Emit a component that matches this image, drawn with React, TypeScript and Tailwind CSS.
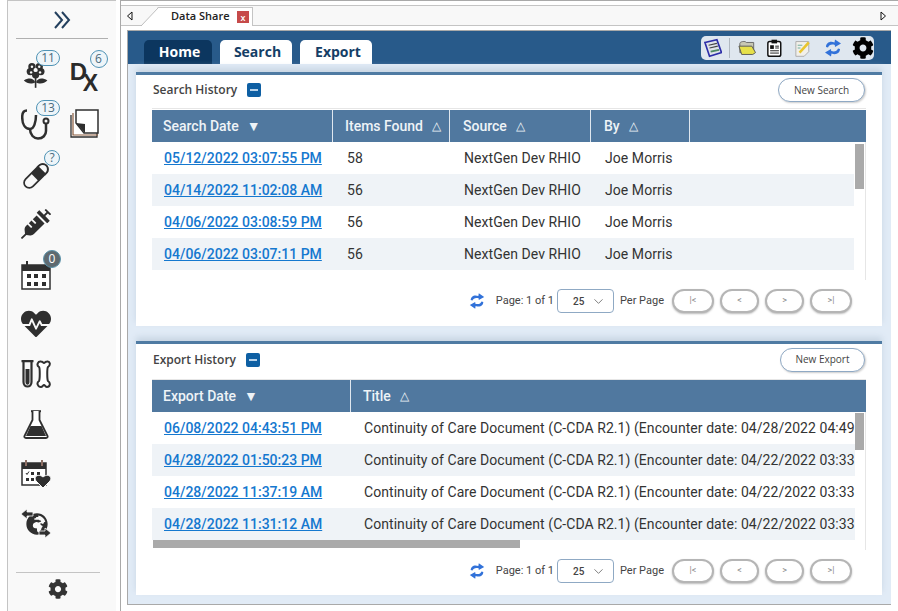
import React from "react";
import { FaCog, FaHeartbeat, FaSyringe, FaGlobeAfrica } from "react-icons/fa";
import { ChevronDown } from "lucide-react";

const ink = "#2f2f2f";

function Badge({ n, dark, className }: { n: string; dark?: boolean; className: string }) {
  return (
    <span
      className={
        "absolute flex h-[16px] items-center justify-center rounded-full border text-[12px] leading-none font-['Open_Sans',sans-serif] " +
        (dark ? "border-[#5b93ab] bg-[#5f6a70] text-white " : "border-[#4f93b5] bg-[#eef5f9] text-[#4a6a7c] ") +
        className
      }
    >
      {n}
    </span>
  );
}

function Refresh({ size = 20 }: { size?: number }) {
  return (
    <svg width={size} height={size} viewBox="0 0 20 20">
      <path d="M3 9C3 5 7 2.500 11.500 4.500L12 1.500L18 5.500L12 9L11.800 7C8.500 5.800 6 7 5 9.500Z" fill="#3272d9" />
      <path d="M17 11C17 15 13 17.500 8.500 15.500L8 18.500L2 14.500L8 11L8.200 13C11.500 14.200 14 13 15 10.500Z" fill="#3272d9" />
    </svg>
  );
}

function Sidebar() {
  return (
    <aside className="flex h-full w-[108px] flex-col items-center border-t border-[#c4c4c4] bg-[#f9f9f9]">
      <svg width="18" height="18" viewBox="0 0 18 18" className="mt-[10px] shrink-0" fill="none" stroke="#24405e" strokeWidth="2">
        <path d="M2 1L9 9L2 17" />
        <path d="M9 1L16 9L9 17" />
      </svg>
      <div className="mt-[9px] h-px w-[92px] shrink-0 bg-[#b0b0b0]" />
      <div className="mt-[10px] grid w-[106px] grid-cols-2 grid-rows-[50px_50px_50px_50px_50px_50px_50px_50px_50px_50px] pl-[1px]">
        <Cell>
          <Flower />
          <Badge n="11" className="left-[26px] top-[1px] w-[24px]" />
        </Cell>
        <Cell>
          <span className="relative block h-[34px] w-[34px] text-[#2b2b2b] font-['Liberation_Sans',sans-serif] font-bold leading-none">
            <span className="absolute -left-[2px] top-[3px] text-[24px]">D</span>
            <span className="absolute left-[11px] top-[15px] text-[23px]">X</span>
          </span>
          <Badge n="6" className="left-[27px] top-[1px] h-[18px] w-[18px]" />
        </Cell>
        <Cell>
          <Stethoscope />
          <Badge n="13" className="left-[26px] top-[1px] w-[24px]" />
        </Cell>
        <Cell>
          <span className="-translate-x-[4px]">
            <Notes />
          </span>
        </Cell>
        <Cell>
          <span className="translate-y-[2px]">
            <Capsule />
          </span>
          <Badge n="?" className="left-[34px] top-[1px] w-[16px]" />
        </Cell>
        <Cell />
        <Cell>
          <FaSyringe size={30} color={ink} />
        </Cell>
        <Cell />
        <Cell>
          <span className="translate-y-[1px]">
            <Calendar />
          </span>
          <Badge n="0" dark className="left-[33px] top-[1px] h-[18px] w-[18px]" />
        </Cell>
        <Cell />
        <Cell>
          <FaHeartbeat size={30} color={ink} />
        </Cell>
        <Cell />
        <Cell>
          <TubeBone />
        </Cell>
        <Cell />
        <Cell>
          <Flask />
        </Cell>
        <Cell />
        <Cell>
          <CalHeart />
        </Cell>
        <Cell />
        <Cell>
          <GlobeArrows />
        </Cell>
        <Cell />
      </div>
      <div className="mt-auto mb-[38px] h-px w-[84px] -translate-x-[4px] shrink-0 bg-[#c4c4c4]" />
      <div className="absolute bottom-[12px] left-[48px] text-[#333]">
        <FaCog size={20} />
      </div>
    </aside>
  );
}

function Cell({ children }: { children?: React.ReactNode }) {
  return <div className="relative flex items-center justify-center">{children}</div>;
}

function Flower() {
  return (
    <svg width="26" height="30" viewBox="0 0 32 34">
      <g fill={ink}>
        <circle cx="11" cy="8" r="4.500" />
        <circle cx="20" cy="8" r="4.500" />
        <circle cx="9" cy="14" r="4.500" />
        <circle cx="22" cy="14" r="4.500" />
        <circle cx="15.500" cy="18" r="4.500" />
        <path d="M1 25C7 21 13 22 15 27C11 30 5 29 1 25Z" />
        <path d="M30 25C24 21 18 22 16 27C20 30 26 29 30 25Z" />
        <rect x="14.500" y="20" width="2" height="14" />
      </g>
      <circle cx="15.500" cy="12" r="2.500" fill="#f9f9f9" />
      <circle cx="11" cy="8" r="1.500" fill="#f9f9f9" />
      <circle cx="20" cy="8" r="1.500" fill="#f9f9f9" />
      <circle cx="10" cy="15" r="1.500" fill="#f9f9f9" />
      <circle cx="21" cy="15" r="1.500" fill="#f9f9f9" />
    </svg>
  );
}

function Stethoscope() {
  return (
    <svg width="30" height="31" viewBox="0 0 30 31" fill="none" stroke={ink} strokeWidth="2.500">
      <path d="M6 1.500C2 1.500 1.200 4 1.200 8C1.200 15 4 20 9 20C13 20 15 13 15 6" />
      <path d="M9 20C9 26 13 29.500 17 29.500C22 29.500 25 26 25 22V14" />
      <circle cx="25" cy="12" r="2.500" fill="#f9f9f9" strokeWidth="2" />
    </svg>
  );
}

function Notes() {
  return (
    <svg width="30" height="30" viewBox="0 0 30 30">
      <path d="M1 6V28H27V24" fill="#fff" stroke={ink} strokeWidth="1.300" />
      <path d="M3 4V26H28" fill="none" stroke="#8a5a3c" strokeWidth="1.200" />
      <path d="M6 1H28V24H14L6 14Z" fill="#fff" stroke={ink} strokeWidth="1.500" />
      <path d="M6 14L15 15L15 24Z" fill={ink} />
    </svg>
  );
}

function Capsule() {
  return (
    <svg width="26" height="26" viewBox="0 0 30 30">
      <g transform="rotate(-45 15 15)">
        <rect x="-2" y="9" width="34" height="12" rx="6" fill="#f9f9f9" stroke={ink} strokeWidth="2" />
        <rect x="13" y="9" width="11" height="12" fill={ink} />
        <path d="M24 9H26C29 9 32 12 32 15C32 18 29 21 26 21H24Z" fill="#f9f9f9" stroke={ink} strokeWidth="2" />
      </g>
    </svg>
  );
}

function Calendar() {
  return (
    <svg width="30" height="30" viewBox="0 0 30 30">
      <rect x="1" y="5" width="28" height="24" fill="#fff" stroke={ink} strokeWidth="1.500" />
      <rect x="1" y="5" width="28" height="6" fill={ink} />
      <rect x="5" y="1" width="2" height="7" fill={ink} />
      <g fill={ink}>
        <rect x="6" y="14" width="4" height="4" />
        <rect x="13" y="14" width="4" height="4" />
        <rect x="21" y="14" width="4" height="4" />
        <rect x="6" y="22" width="4" height="4" />
        <rect x="13" y="22" width="4" height="4" />
        <rect x="21" y="22" width="4" height="4" />
      </g>
    </svg>
  );
}

function TubeBone() {
  return (
    <svg width="30" height="28" viewBox="0 0 30 28">
      <path d="M0.500 1.200H12.500M2.500 1V22C2.500 28 10.500 28 10.500 22V1" fill="none" stroke={ink} strokeWidth="2.200" />
      <path d="M4.500 9H8.500V22C8.500 25.500 4.500 25.500 4.500 22Z" fill={ink} />
      <path
        d="M18 7C15 5 17 1 20 1.500C21.500 1.500 22 3 23 3C24 3 24.500 1.500 26 1.500C29 1 30 5 27 7C26 8 26 19 27 21C30 23 29 27 26 27C24.500 27 24 25 23 25C22 25 21.500 27 20 27C17 27 15 23 18 21C19 19 19 8 18 7Z"
        fill="#fff"
        stroke={ink}
        strokeWidth="2"
      />
    </svg>
  );
}

function Flask() {
  return (
    <svg width="26" height="29" viewBox="0 0 26 29">
      <path d="M8 1.200H18" stroke={ink} strokeWidth="2" />
      <path d="M9.500 1V10L1.500 26C1 27 1.500 28 3 28H23C24.500 28 25 27 24.500 26L16.500 10V1" fill="#fff" stroke={ink} strokeWidth="1.800" />
      <path d="M7.500 16H18.500L23 26H3Z" fill={ink} />
    </svg>
  );
}

function CalHeart() {
  return (
    <svg width="30" height="30" viewBox="0 0 30 30">
      <rect x="1" y="4" width="24" height="22" fill="#fff" stroke={ink} strokeWidth="1.500" />
      <rect x="1" y="4" width="24" height="6" fill={ink} />
      <rect x="4" y="1" width="2" height="6" fill="#8d6e63" />
      <rect x="20" y="1" width="2" height="6" fill="#8d6e63" />
      <g fill={ink}>
        <rect x="10" y="13" width="3" height="3" />
        <rect x="16" y="13" width="3" height="3" />
        <rect x="5" y="19" width="3" height="3" />
        <rect x="10" y="19" width="3" height="3" />
      </g>
      <path d="M5 14L6 15.500L8 12.500" fill="none" stroke={ink} strokeWidth="1" />
      <path d="M22 29L15 22C12 18 17 14 22 18C27 14 32 18 29 22Z" fill={ink} stroke="#f9f9f9" strokeWidth="1" />
    </svg>
  );
}

function GlobeArrows() {
  return (
    <span className="relative block h-[30px] w-[30px]">
      <span className="absolute left-[5px] top-[4px]">
        <FaGlobeAfrica size={22} color={ink} />
      </span>
      <svg width="30" height="30" viewBox="0 0 30 30" className="absolute left-0 top-0">
        <path d="M0 5L6 0V3H12V7H6V10Z" fill={ink} stroke="#f9f9f9" strokeWidth="0.800" />
        <path d="M30 24L24 19V22H18V26H24V29Z" fill={ink} stroke="#f9f9f9" strokeWidth="0.800" />
      </svg>
    </span>
  );
}

function Pager() {
  const btn =
    "flex h-[24px] items-center justify-center rounded-full border-2 border-[#b5b5b5] bg-white text-[9px] text-[#8a8a8a] shadow-[0_1px_2px_#bbb] font-['Roboto',sans-serif]";
  return (
    <div className="flex items-center justify-end pr-[14px] text-[11px] text-[#444] font-['Roboto',sans-serif]">
      <Refresh size={18} />
      <span className="ml-[10px]">Page: 1 of 1</span>
      <div className="ml-[3px] flex h-[24px] w-[57px] items-center justify-between rounded-[4px] border border-[#8fa9c4] pl-[15px] pr-[7px]">
        <span className="text-[10px] font-medium">25</span>
        <ChevronDown size={15} strokeWidth={1.200} color="#555" />
      </div>
      <span className="ml-[6px]">Per Page</span>
      <div className="ml-[8px] flex gap-[6px]">
        <span className={btn + " w-[42px]"}>|&lt;</span>
        <span className={btn + " w-[39px]"}>&lt;</span>
        <span className={btn + " w-[39px]"}>&gt;</span>
        <span className={btn + " w-[42px]"}>&gt;|</span>
      </div>
    </div>
  );
}

function Minus() {
  return (
    <span className="flex h-[14px] w-[14px] items-center justify-center rounded-[2px] bg-[#0e5fa3]">
      <span className="h-[2px] w-[8px] bg-[#b9d3ea]" />
    </span>
  );
}

function HeadCell({ label, arrow, className }: { label: string; arrow: string; className: string }) {
  return (
    <div className={"flex h-full shrink-0 items-center border-r border-[#dfe7ef] pl-[11px] " + className}>
      <span>{label}</span>
      <span className={arrow === "▼" ? "ml-[8px] text-[14px]" : "ml-[9px] text-[12px] font-normal"}>{arrow}</span>
    </div>
  );
}

const searchRows = ["05/12/2022 03:07:55 PM", "04/14/2022 11:02:08 AM", "04/06/2022 03:08:59 PM", "04/06/2022 03:07:11 PM"];
const searchItems = ["58", "56", "56", "56"];
const exportRows = [
  ["06/08/2022 04:43:51 PM", "04/28/2022 04:49"],
  ["04/28/2022 01:50:23 PM", "04/22/2022 03:33"],
  ["04/28/2022 11:37:19 AM", "04/22/2022 03:33"],
  ["04/28/2022 11:31:12 AM", "04/22/2022 03:33"],
];

function SearchPanel() {
  return (
    <section className="h-[254px] shrink-0 border-t-[3px] border-[#4f7ba3] bg-white px-[16px] shadow-[0_-4px_6px_#c9d6e4]">
      <div className="flex h-[34px] items-center justify-between border-b border-[#e6e6e6] pb-[3px]">
        <div className="ml-[1px] flex items-center gap-[10px] text-[12px] font-semibold text-[#444] font-['Open_Sans',sans-serif]">
          Search History
          <Minus />
        </div>
        <button className="mr-[1px] h-[24px] w-[87px] rounded-full border border-[#8fa9c4] bg-white text-[10px] text-[#444] shadow-[1px_1px_2px_#ccc] font-['Open_Sans',sans-serif]">
          New Search
        </button>
      </div>
      <div className="mt-[1px] flex h-[32px] items-center bg-[#50789f] text-[14px] font-medium text-[#eef3f7] font-['Roboto',sans-serif]">
        <HeadCell label="Search Date" arrow="▼" className="w-[181px]" />
        <HeadCell label="Items Found" arrow="△" className="w-[117px] pl-[12px]" />
        <HeadCell label="Source" arrow="△" className="w-[141px] pl-[13px]" />
        <HeadCell label="By" arrow="△" className="w-[99px] pl-[13px]" />
      </div>
      <div className="relative h-[138px] overflow-hidden border-r border-[#e6e6e6]">
        <div className="mr-[11px]">
          {searchRows.map((d, i) => (
            <div key={d} className={"flex h-[32px] items-center text-[14px] tracking-[0.06px] text-[#333] font-['Roboto',sans-serif] " + (i % 2 ? "bg-[#eff3f7]" : "bg-white")}>
              <a className="ml-[12px] w-[183px] font-medium tracking-normal text-[#1578cf] underline">{d}</a>
              <span className="w-[117px]">{searchItems[i]}</span>
              <span className="w-[141px]">NextGen Dev RHIO</span>
              <span>Joe Morris</span>
            </div>
          ))}
        </div>
        <div className="absolute right-[1px] top-[2px] h-[45px] w-[9px] bg-[#aaa]" />
      </div>
      <div className="mt-[9px]">
        <Pager />
      </div>
    </section>
  );
}

function ExportPanel() {
  return (
    <section className="h-[254px] shrink-0 border-t-[3px] border-[#4f7ba3] bg-white px-[16px] shadow-[0_-4px_6px_#c9d6e4]">
      <div className="flex h-[36px] items-center justify-between border-b border-[#e6e6e6] pb-[4px]">
        <div className="ml-[1px] flex items-center gap-[10px] text-[12px] font-semibold text-[#444] font-['Open_Sans',sans-serif]">
          Export History
          <Minus />
        </div>
        <button className="mr-[1px] h-[24px] w-[85px] rounded-full border border-[#8fa9c4] bg-white text-[10px] text-[#444] shadow-[1px_1px_2px_#ccc] font-['Open_Sans',sans-serif]">
          New Export
        </button>
      </div>
      <div className="flex h-[32px] items-center bg-[#50789f] text-[14px] font-medium text-[#eef3f7] font-['Roboto',sans-serif]">
        <HeadCell label="Export Date" arrow="▼" className="w-[199px]" />
        <div className="flex h-full items-center pl-[12px]">
          Title <span className="ml-[9px] text-[12px] font-normal">△</span>
        </div>
      </div>
      <div className="relative h-[138px] overflow-hidden border-r border-[#e6e6e6]">
        <div className="mr-[10px]">
          {exportRows.map((r, i) => (
            <div key={r[0]} className={"flex h-[32px] items-center overflow-hidden whitespace-nowrap text-[14px] tracking-[0.06px] text-[#333] font-['Roboto',sans-serif] " + (i % 2 ? "bg-[#eff3f7]" : "bg-white")}>
              <a className="ml-[12px] w-[200px] shrink-0 font-medium tracking-normal text-[#1578cf] underline">{r[0]}</a>
              <span>Continuity of Care Document (C-CDA R2.1) (Encounter date: {r[1]}</span>
            </div>
          ))}
        </div>
        <div className="absolute right-[1px] top-[1px] h-[37px] w-[9px] bg-[#aaa]" />
        <div className="absolute bottom-[2px] left-[1px] h-[8px] w-[367px] bg-[#aaa]" />
      </div>
      <div className="mt-[9px]">
        <Pager />
      </div>
    </section>
  );
}

export default function App() {
  return (
    <div className="relative flex h-[611px] w-[898px] overflow-hidden bg-white">
      <div className="ml-[7px] h-full w-px shrink-0 bg-[#c4c4c4]" />
      <Sidebar />
      <div className="ml-[4px] flex h-full min-w-0 flex-1 flex-col border-l border-t border-[#a9a9a9] bg-white">
        <div className="mt-[4px] flex h-[21px] shrink-0 items-center justify-between border-y border-[#c4c4c4] bg-[#f8f8f8] pl-[5px] pr-[11px]">
          <svg width="7" height="10" viewBox="0 0 7 10" fill="none" stroke="#111">
            <path d="M6 1L1.500 5L6 9Z" />
          </svg>
          <svg width="7" height="10" viewBox="0 0 7 10" fill="none" stroke="#111">
            <path d="M1 1L5.500 5L1 9Z" />
          </svg>
        </div>
        <div className="absolute left-[141px] top-[7px] flex h-[19px] w-[112px] items-center border-x border-t border-[#c4c4c4] bg-white pb-[1px] pl-[29px] text-[11px] font-semibold text-[#222] font-['Open_Sans',sans-serif] [clip-path:polygon(17px_0,100%_0,100%_100%,0_100%)]">
          Data Share
          <span className="absolute left-[95px] top-[3px] flex h-[12px] w-[12px] items-center justify-center bg-[#c64a4a] text-[9px] leading-none text-white">x</span>
        </div>
        <svg width="19" height="19" viewBox="0 0 19 19" className="absolute left-[140px] top-[7px]" fill="none" stroke="#bdbdbd">
          <path d="M1 19L18 1" />
        </svg>
        <div className="mb-[6px] ml-[6px] mr-[7px] mt-[4px] flex min-h-0 flex-1 flex-col border border-r-0 border-[#a9a9a9]">
          <div className="flex h-[33px] shrink-0 items-end justify-between bg-[#285a8a] pl-[16px] pr-[17px]">
            <div className="flex gap-[8px] text-[14px] font-bold font-['Open_Sans',sans-serif]">
              <span className="flex h-[24px] w-[68px] items-center justify-center rounded-t-[5px] bg-[#0c365f] pb-[1px] pl-[3px] text-white">Home</span>
              <span className="flex h-[24px] w-[72px] items-center justify-center rounded-t-[5px] bg-white pb-[1px] pl-[3px] text-[#153e66]">Search</span>
              <span className="flex h-[24px] w-[72px] items-center justify-center rounded-t-[5px] bg-white pb-[1px] pl-[4px] text-[#153e66]">Export</span>
            </div>
            <div className="mb-[4px] flex h-[24px] w-[173px] items-center rounded-[5px] bg-[#dfe7ef] pl-[3px]">
              <svg width="20" height="20" viewBox="0 0 20 20">
                <path d="M1 4L14 1L19 15L6 19Z" fill="#dfe3ea" stroke="#2c2ea8" strokeWidth="1.800" />
                <path d="M5 7L14 5M6 10L15 8" stroke="#444" strokeWidth="1.200" />
                <path d="M7 13L16 11L16.500 13L7.500 15Z" fill="#4c8a62" />
              </svg>
              <span className="ml-[7px] mr-[8px] h-[20px] w-px bg-[#b0b8c0]" />
              <svg width="20" height="18" viewBox="0 0 20 18">
                <path d="M2 14V4C2 2 8 1 9 3H17V14Z" fill="#c8c8b4" stroke="#666" />
                <path d="M1 7H15L19 14L16 16H4Z" fill="#e6e04a" stroke="#555" />
              </svg>
              <svg width="18" height="20" viewBox="0 0 18 20" className="ml-[9px]">
                <rect x="2" y="3" width="14" height="16" rx="2" fill="#fff" stroke="#111" strokeWidth="1.600" />
                <rect x="6" y="1" width="6" height="4" fill="#111" />
                <rect x="4.500" y="7" width="4" height="4" fill="#111" />
                <path d="M10 8H14M10 10H14M4.500 13H14M4.500 15.500H14" stroke="#111" />
              </svg>
              <svg width="18" height="20" viewBox="0 0 18 20" className="ml-[12px]">
                <path d="M2 3H16V14L11 19H2Z" fill="#f2f0ea" stroke="#aaa" />
                <path d="M5 14L15 3L17 5L7 16Z" fill="#e9c62f" />
                <path d="M4 7H9M4 10H7" stroke="#6a9" />
              </svg>
              <span className="ml-[12px]">
                <Refresh size={20} />
              </span>
              <span className="ml-[9px]">
                <FaCog size={22} color="#000" />
              </span>
            </div>
          </div>
          <div className="flex min-h-0 flex-1 flex-col gap-[15px] bg-[#e1ebf6] pl-[8px] pr-[9px] pt-[8px]">
            <SearchPanel />
            <ExportPanel />
          </div>
        </div>
      </div>
    </div>
  );
}
